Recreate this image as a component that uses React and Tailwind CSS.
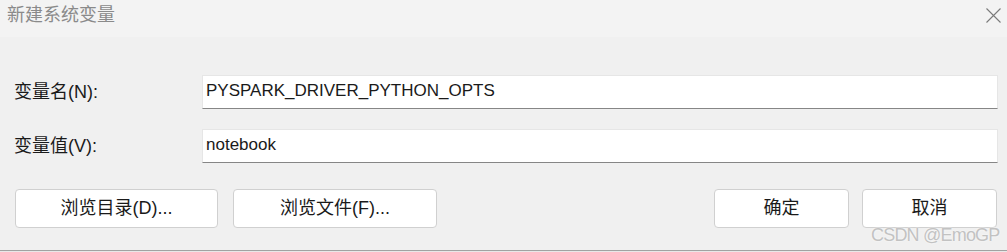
export default function App() {
  const font = "font-['Liberation_Sans','Noto_Sans_CJK_SC',sans-serif]";

  return (
    <div className={`relative flex h-[252px] w-[1007px] flex-col overflow-hidden bg-[#f0f0f0] text-[#1a1a1a] ${font}`}>
      {/* title bar */}
      <div className="flex h-[37px] shrink-0 items-start justify-between bg-[#f3f3f3] pl-[7px] pr-[6px] pt-[4px]">
        <span className="text-[18px] leading-[22px] text-[#8a8a8a]">新建系统变量</span>
        <svg className="mt-[4px]" width="15" height="15" viewBox="0 0 15 15">
          <path d="M0.5 0.5 L14.5 14.5 M14.5 0.5 L0.5 14.5" stroke="#7a7a7a" strokeWidth="1.1" fill="none" />
        </svg>
      </div>

      {/* fields */}
      <div className="mt-[38px] flex flex-col gap-[20px]">
        <div className="flex items-center">
          <label className="w-[202px] pl-[14px] text-[18px]">变量名(N):</label>
          <div className="flex h-[34px] w-[796px] items-center border border-b-[#868686] border-x-[#e6e6e6] border-t-[#e6e6e6] bg-white pb-[3px] pl-[3px] text-[17px]">
            PYSPARK_DRIVER_PYTHON_OPTS
          </div>
        </div>
        <div className="flex items-center">
          <label className="w-[202px] pl-[14px] text-[18px]">变量值(V):</label>
          <div className="flex h-[34px] w-[796px] items-center border border-b-[#868686] border-x-[#e6e6e6] border-t-[#e6e6e6] bg-white pb-[3px] pl-[3px] text-[17px]">
            notebook
          </div>
        </div>
      </div>

      {/* buttons */}
      <div className="mt-[26px] flex items-center pl-[15px]">
        <button className="h-[39px] w-[203px] rounded-[4px] border border-[#d0d0d0] bg-white text-[18px]">浏览目录(D)...</button>
        <button className="ml-[15px] h-[39px] w-[204px] rounded-[4px] border border-[#d0d0d0] bg-white text-[18px]">浏览文件(F)...</button>
        <button className="ml-[277px] h-[39px] w-[135px] rounded-[4px] border border-[#d0d0d0] bg-white text-[18px]">确定</button>
        <button className="ml-[13px] h-[39px] w-[135px] rounded-[4px] border border-[#d0d0d0] bg-white text-[18px]">取消</button>
      </div>

      {/* window bottom edge */}
      <div className="mt-auto h-[1px] bg-[#a2a2a2]" />
      <div className="h-[1px] bg-[#e8e8e8]" />

      {/* watermark */}
      <div className="absolute left-[871px] top-[224px] whitespace-nowrap text-[18px] leading-[22px] tracking-[-0.8px] text-[#c2c2c2] [text-shadow:0_0_2px_#ffffff]">
        CSDN @EmoGP
      </div>
    </div>
  );
}
